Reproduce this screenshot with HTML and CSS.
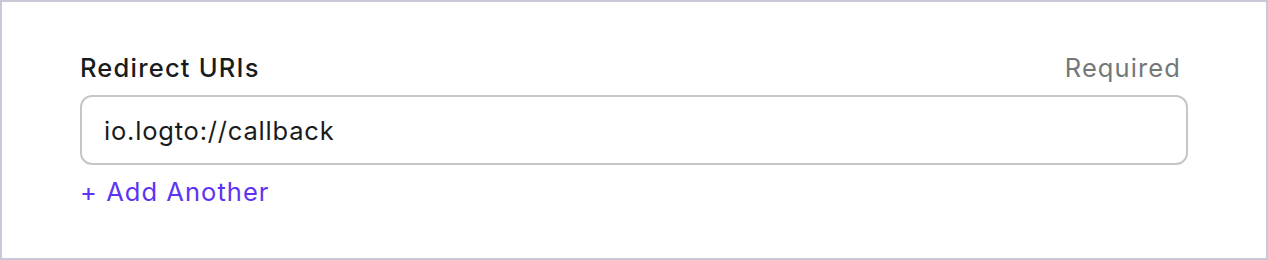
FILE: index.html
```html
<!DOCTYPE html>
<html>
<head>
<meta charset="utf-8">
<link rel="stylesheet" href="styles.css">
</head>
<body>
<div class="frame">
  <div class="field">
    <div class="field-head">
      <span class="label">Redirect URIs</span>
      <span class="required">Required</span>
    </div>
    <div class="input">io.logto://callback</div>
    <div class="add">+ Add Another</div>
  </div>
</div>
</body>
</html>
```
FILE: styles.css
```css
html, body {
  margin: 0;
  padding: 0;
  background: #ffffff;
}
.frame {
  width: 1268px;
  height: 260px;
  box-sizing: border-box;
  border: 2px solid #c9c8d6;
  padding: 50px 78px 0 78px;
  font-family: Inter, "Noto Sans", sans-serif;
}
.field {
  display: flex;
  flex-direction: column;
}
.field-head {
  display: flex;
  justify-content: space-between;
  align-items: baseline;
  height: 32px;
  line-height: 32px;
  margin-bottom: 11px;
}
.label {
  font-size: 25.5px;
  font-weight: 500;
  letter-spacing: 1.2px;
  color: #191c1d;
}
.required {
  font-size: 25.5px;
  letter-spacing: 1.1px;
  color: #747778;
  margin-right: 7px;
}
.input {
  height: 70px;
  box-sizing: border-box;
  border: 2px solid #c4c7c7;
  border-radius: 12px;
  padding: 0 22px;
  display: flex;
  align-items: center;
  font-size: 25.5px;
  letter-spacing: 0.8px;
  color: #191c1d;
}
.add {
  margin-top: 11px;
  font-size: 25.5px;
  letter-spacing: 1.05px;
  line-height: 32px;
  color: #5d34f2;
  align-self: flex-start;
}
```
